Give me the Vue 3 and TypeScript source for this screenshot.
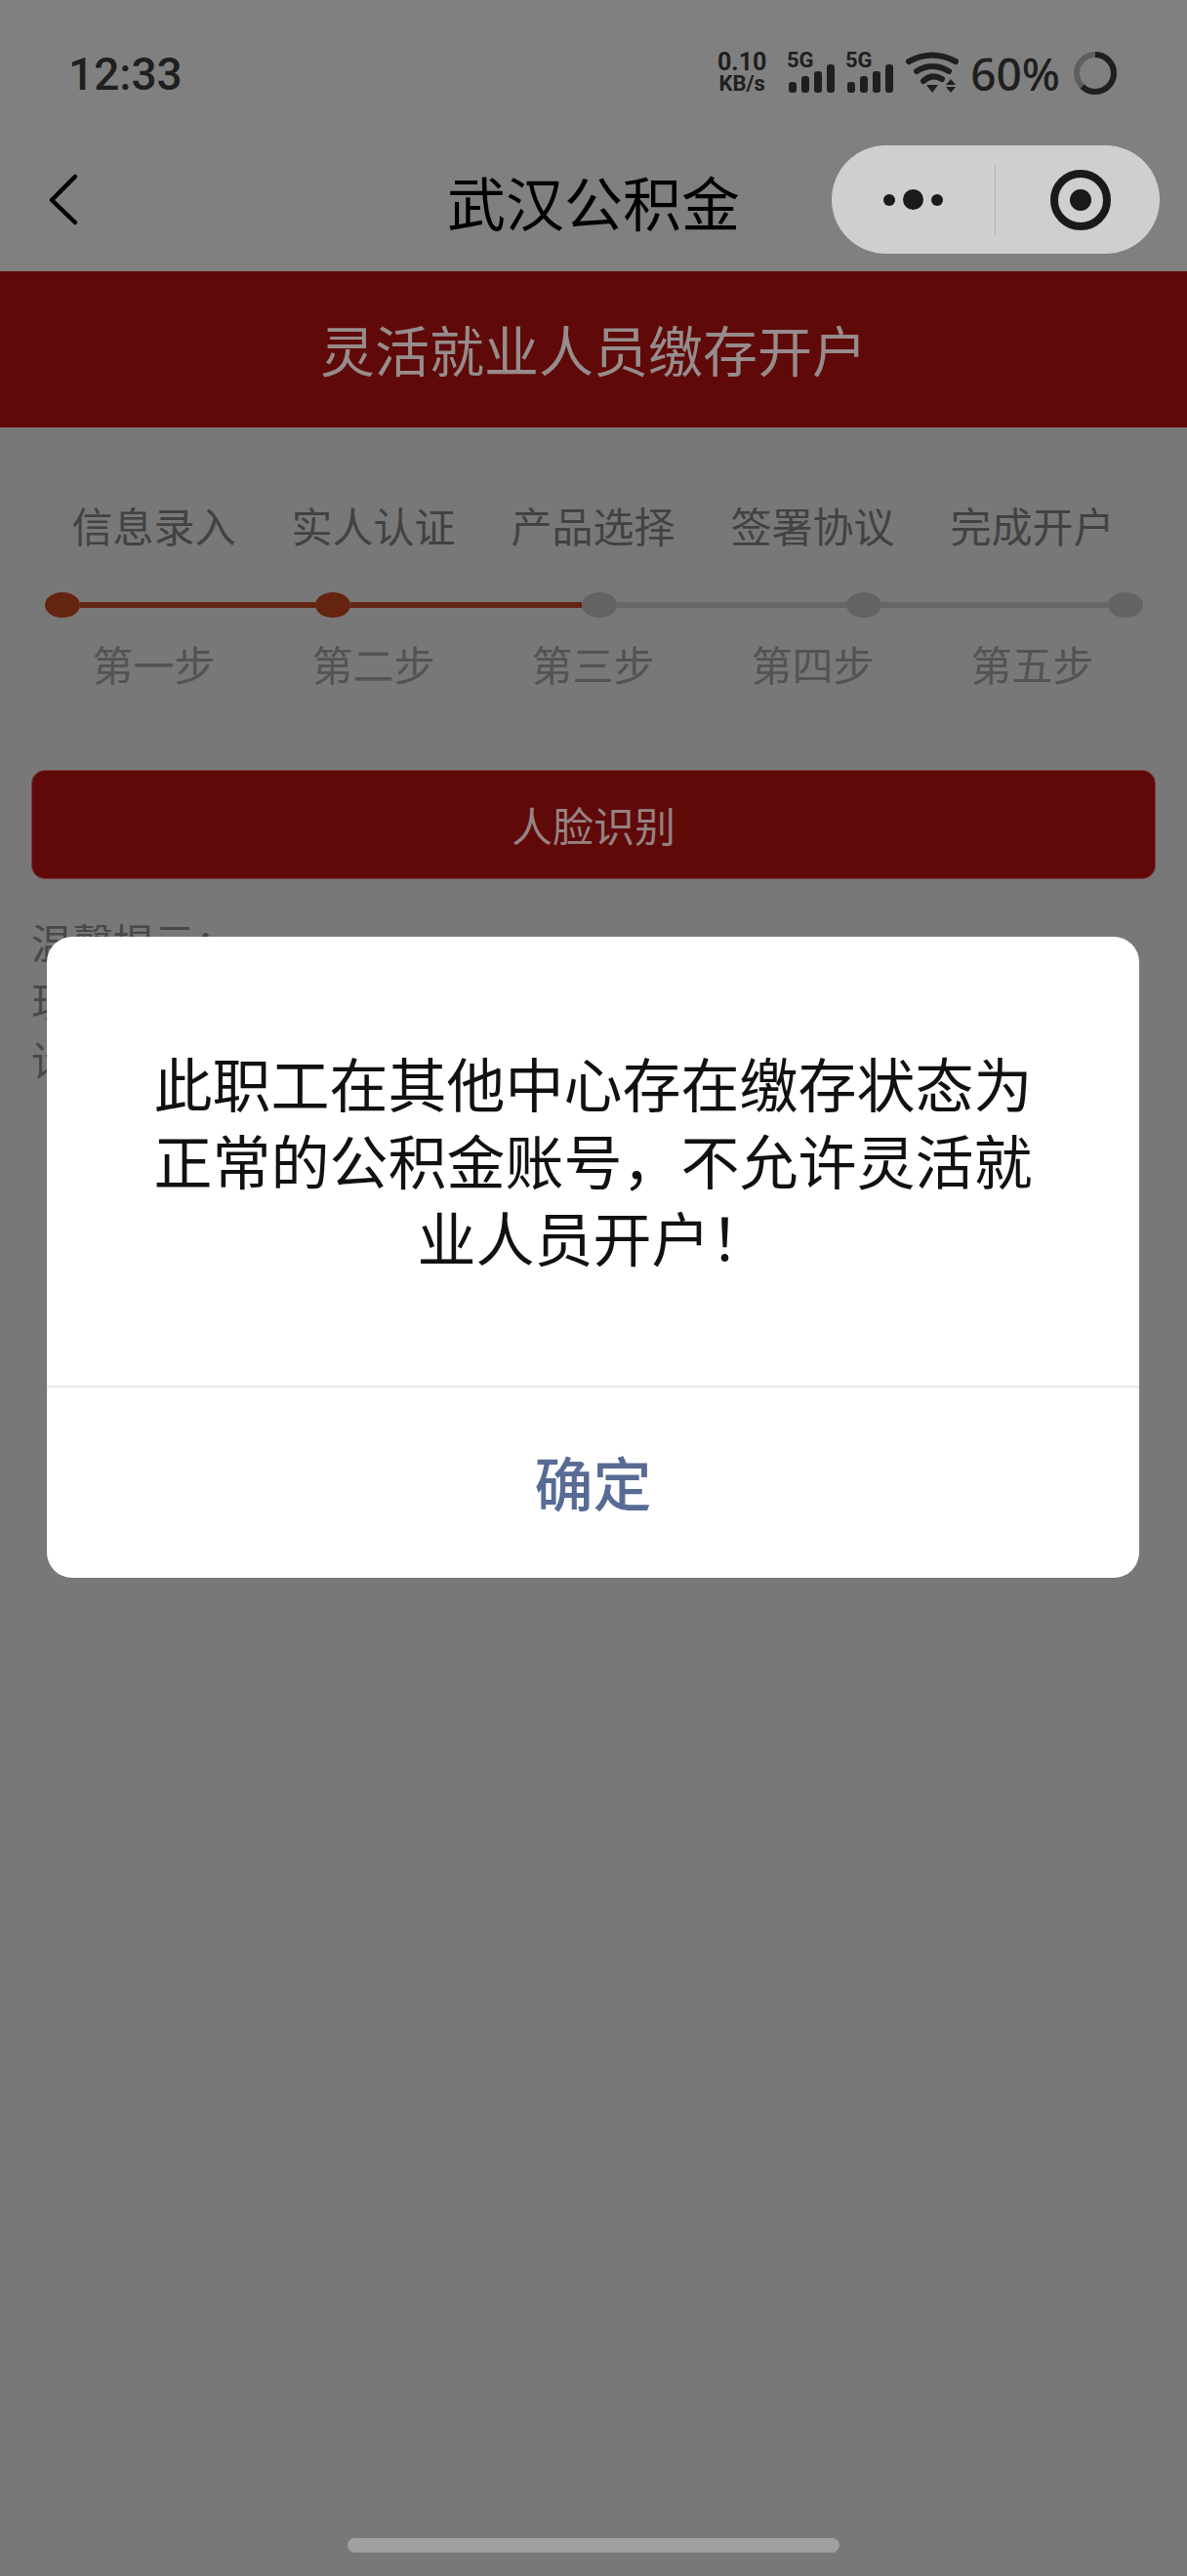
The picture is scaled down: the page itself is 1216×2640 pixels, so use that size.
<script setup lang="ts">
interface Step {
  title: string
  sub: string
  active: boolean
  lineWidth: number
}

const steps: Step[] = [
  { title: '信息录入', sub: '第一步', active: true, lineWidth: 241 },
  { title: '实人认证', sub: '第二步', active: true, lineWidth: 237 },
  { title: '产品选择', sub: '第三步', active: false, lineWidth: 235 },
  { title: '签署协议', sub: '第四步', active: false, lineWidth: 232 },
  { title: '完成开户', sub: '第五步', active: false, lineWidth: 0 },
]

// 第三个节点前的连线也是已完成状态
const isLineActive = (index: number) => index < 2
const signalBars = [
  { x: 2, y: 31, h: 11 },
  { x: 15, y: 25, h: 17 },
  { x: 28, y: 20, h: 22 },
  { x: 41, y: 13, h: 29 },
]
</script>

<template>
  <div class="page">
    <!-- 状态栏 -->
    <div class="status-bar">
      <span class="time">12:33</span>
      <div class="status-icons">
        <div class="speed">
          <span>0.10</span>
          <span class="speed-unit">KB/s</span>
        </div>
        <svg v-for="n in 2" :key="n" class="signal" width="52" height="44" viewBox="0 0 52 44">
          <text x="0" y="16" class="signal-text">5G</text>
          <rect
            v-for="bar in signalBars"
            :key="bar.x"
            :x="bar.x"
            :y="bar.y"
            width="8"
            :height="bar.h"
            rx="3"
            fill="#1f1f1f"
          />
        </svg>
        <svg class="wifi" width="54" height="44" viewBox="0 0 54 44" fill="none">
          <path d="M3 10 Q27 -3 51 10" stroke="#1f1f1f" stroke-width="6" stroke-linecap="round" />
          <path d="M11 20 Q27 10 44 20" stroke="#1f1f1f" stroke-width="6" stroke-linecap="round" />
          <path d="M18 30 Q27 22 37 28" stroke="#1f1f1f" stroke-width="6" stroke-linecap="round" />
          <path d="M21 34 H33 L27 42 Z" fill="#1f1f1f" />
          <path d="M41 34 L46 28 L51 34 Z" fill="#1f1f1f" />
          <path d="M41 36 H51 L46 42 Z" fill="#1f1f1f" />
        </svg>
        <span class="battery-text">60%</span>
        <svg class="battery" width="44" height="44" viewBox="0 0 44 44" fill="none">
          <circle cx="22" cy="22" r="19" stroke="#5f5f5f" stroke-width="6" />
          <circle
            cx="22"
            cy="22"
            r="19"
            stroke="#1f1f1f"
            stroke-width="6"
            stroke-dasharray="74 120"
            transform="rotate(-90 22 22)"
          />
        </svg>
      </div>
    </div>

    <!-- 导航栏 -->
    <div class="nav-bar">
      <svg class="back" width="34" height="56" viewBox="0 0 34 56" fill="none">
        <path d="M29 4 L5 28 L29 51" stroke="#000" stroke-width="4.5" stroke-linecap="round" stroke-linejoin="round" />
      </svg>
      <div class="nav-title">武汉公积金</div>
      <div class="capsule">
        <div class="capsule-dots">
          <i class="dot-small"></i>
          <i class="dot-big"></i>
          <i class="dot-small"></i>
        </div>
        <div class="capsule-line"></div>
        <div class="capsule-target"><i></i></div>
      </div>
    </div>

    <div class="banner">灵活就业人员缴存开户</div>

    <!-- 步骤条 -->
    <div class="steps-title">
      <span v-for="step in steps" :key="step.title">{{ step.title }}</span>
    </div>
    <div class="steps-track">
      <template v-for="(step, index) in steps" :key="step.sub">
        <i :class="['track-dot', { 'is-active': step.active }]"></i>
        <i
          v-if="step.lineWidth"
          :class="['track-line', { 'is-active': isLineActive(index) }]"
          :style="{ width: `${step.lineWidth}px` }"
        ></i>
      </template>
    </div>
    <div class="steps-sub">
      <span v-for="step in steps" :key="step.sub">{{ step.sub }}</span>
    </div>

    <button class="face-btn" type="button">人脸识别</button>

    <div class="tips">
      <p>温馨提示：</p>
      <p>现</p>
      <p>请</p>
    </div>

    <!-- 弹窗 -->
    <div class="dialog">
      <div class="dialog-body">此职工在其他中心存在缴存状态为正常的公积金账号，不允许灵活就业人员开户！</div>
      <div class="dialog-btn">确定</div>
    </div>

    <div class="home-bar"></div>
  </div>
</template>

<style scoped>
.page {
  position: relative;
  width: 1216px;
  height: 2640px;
  overflow: hidden;
  background: #787878;
  font-family: "Noto Sans CJK SC", "Noto Sans", sans-serif;
}

/* 状态栏 */
.status-bar {
  height: 150px;
  box-sizing: border-box;
  display: flex;
  align-items: center;
  justify-content: space-between;
  padding: 0 72px 0 70px;
  background: #808080;
  color: #1f1f1f;
}

.time {
  padding-top: 2px;
  font-family: Roboto, sans-serif;
  font-size: 46px;
  font-weight: 500;
}

.status-icons {
  display: flex;
  align-items: center;
}

.speed {
  display: flex;
  flex-direction: column;
  align-items: center;
  width: 52px;
  margin-right: 20px;
  font-family: Roboto, sans-serif;
  font-size: 25px;
  font-weight: 700;
  line-height: 22px;
}

.speed-unit {
  font-size: 22px;
}

.signal {
  margin-right: 8px;
  overflow: visible;
}

.signal-text {
  font-family: Roboto, sans-serif;
  font-size: 22px;
  font-weight: 700;
  fill: #1f1f1f;
}

.wifi {
  margin-left: 2px;
  margin-right: 12px;
}

.battery-text {
  font-family: "Noto Sans", sans-serif;
  font-size: 46px;
  font-weight: 500;
  margin-right: 14px;
}

/* 导航栏 */
.nav-bar {
  position: relative;
  height: 128px;
  box-sizing: border-box;
  display: flex;
  align-items: flex-start;
  justify-content: space-between;
  padding-left: 48px;
  padding-right: 28px;
  background: #808080;
}

.back {
  margin-top: 27px;
}

.nav-title {
  position: absolute;
  left: 0;
  right: 0;
  top: 14px;
  text-align: center;
  font-size: 60px;
  line-height: 84px;
  color: #000;
}

.capsule {
  position: relative;
  width: 336px;
  height: 111px;
  margin-top: -1px;
  display: flex;
  align-items: center;
  border-radius: 56px;
  background: #cfcfcf;
}

.capsule-dots {
  width: 167px;
  display: flex;
  align-items: center;
  justify-content: center;
  gap: 8px;
}

.capsule-dots i {
  display: block;
  border-radius: 50%;
  background: #1a1a1a;
}

.dot-small {
  width: 12px;
  height: 12px;
}

.dot-big {
  width: 21px;
  height: 21px;
}

.capsule-line {
  width: 1px;
  height: 72px;
  background: #b4b4b4;
}

.capsule-target {
  width: 62px;
  height: 62px;
  margin-left: 56px;
  box-sizing: border-box;
  display: flex;
  align-items: center;
  justify-content: center;
  border: 8px solid #1a1a1a;
  border-radius: 50%;
}

.capsule-target i {
  display: block;
  width: 22px;
  height: 22px;
  border-radius: 50%;
  background: #1a1a1a;
}

.banner {
  height: 160px;
  box-sizing: border-box;
  display: flex;
  align-items: center;
  justify-content: center;
  padding-bottom: 3px;
  background: #600909;
  color: #968c8c;
  font-size: 56px;
}

/* 步骤条 */
.steps-title,
.steps-sub {
  display: grid;
  grid-template-columns: repeat(5, 225px);
  padding: 0 45px;
  text-align: center;
  font-size: 42px;
  line-height: 60px;
}

.steps-title {
  margin-top: 70px;
  color: #424242;
}

.steps-sub {
  margin-top: 17px;
  color: #535353;
}

.steps-track {
  display: flex;
  align-items: center;
  height: 26px;
  margin-top: 39px;
  padding-left: 46px;
}

.track-dot {
  flex: 0 0 36px;
  height: 26px;
  border-radius: 50%;
  background: #636363;
}

.track-dot.is-active {
  background: #64240f;
}

.track-line {
  height: 6px;
  background: #666;
}

.track-line.is-active {
  background: #642412;
}

.face-btn {
  display: block;
  width: 1152px;
  height: 112px;
  margin: 79px 32px 0;
  padding: 0 0 2px;
  border: 1px solid #7a3a3a;
  border-radius: 14px;
  background: #600909;
  color: #968282;
  font-family: inherit;
  font-size: 42px;
}

.tips {
  margin-top: 34px;
  padding: 0 32px;
  font-size: 42px;
  line-height: 60px;
  color: #484848;
}

.tips p {
  margin: 0;
}

/* 弹窗 */
.dialog {
  position: absolute;
  left: 48px;
  top: 960px;
  width: 1119px;
  height: 657px;
  display: flex;
  flex-direction: column;
  border-radius: 26px;
  background: #fff;
  overflow: hidden;
}

.dialog-body {
  height: 462px;
  box-sizing: border-box;
  display: flex;
  align-items: center;
  justify-content: center;
  padding: 0 108px 6px;
  text-align: center;
  font-size: 60px;
  line-height: 79px;
  color: #111;
  border-bottom: 2px solid #e5e5e5;
}

.dialog-btn {
  flex: 1;
  display: flex;
  align-items: center;
  justify-content: center;
  padding-bottom: 5px;
  font-size: 60px;
  font-weight: 500;
  color: #576b95;
}

.home-bar {
  position: absolute;
  left: 356px;
  top: 2601px;
  width: 504px;
  height: 15px;
  border-radius: 8px;
  background: #a0a0a0;
}
</style>
